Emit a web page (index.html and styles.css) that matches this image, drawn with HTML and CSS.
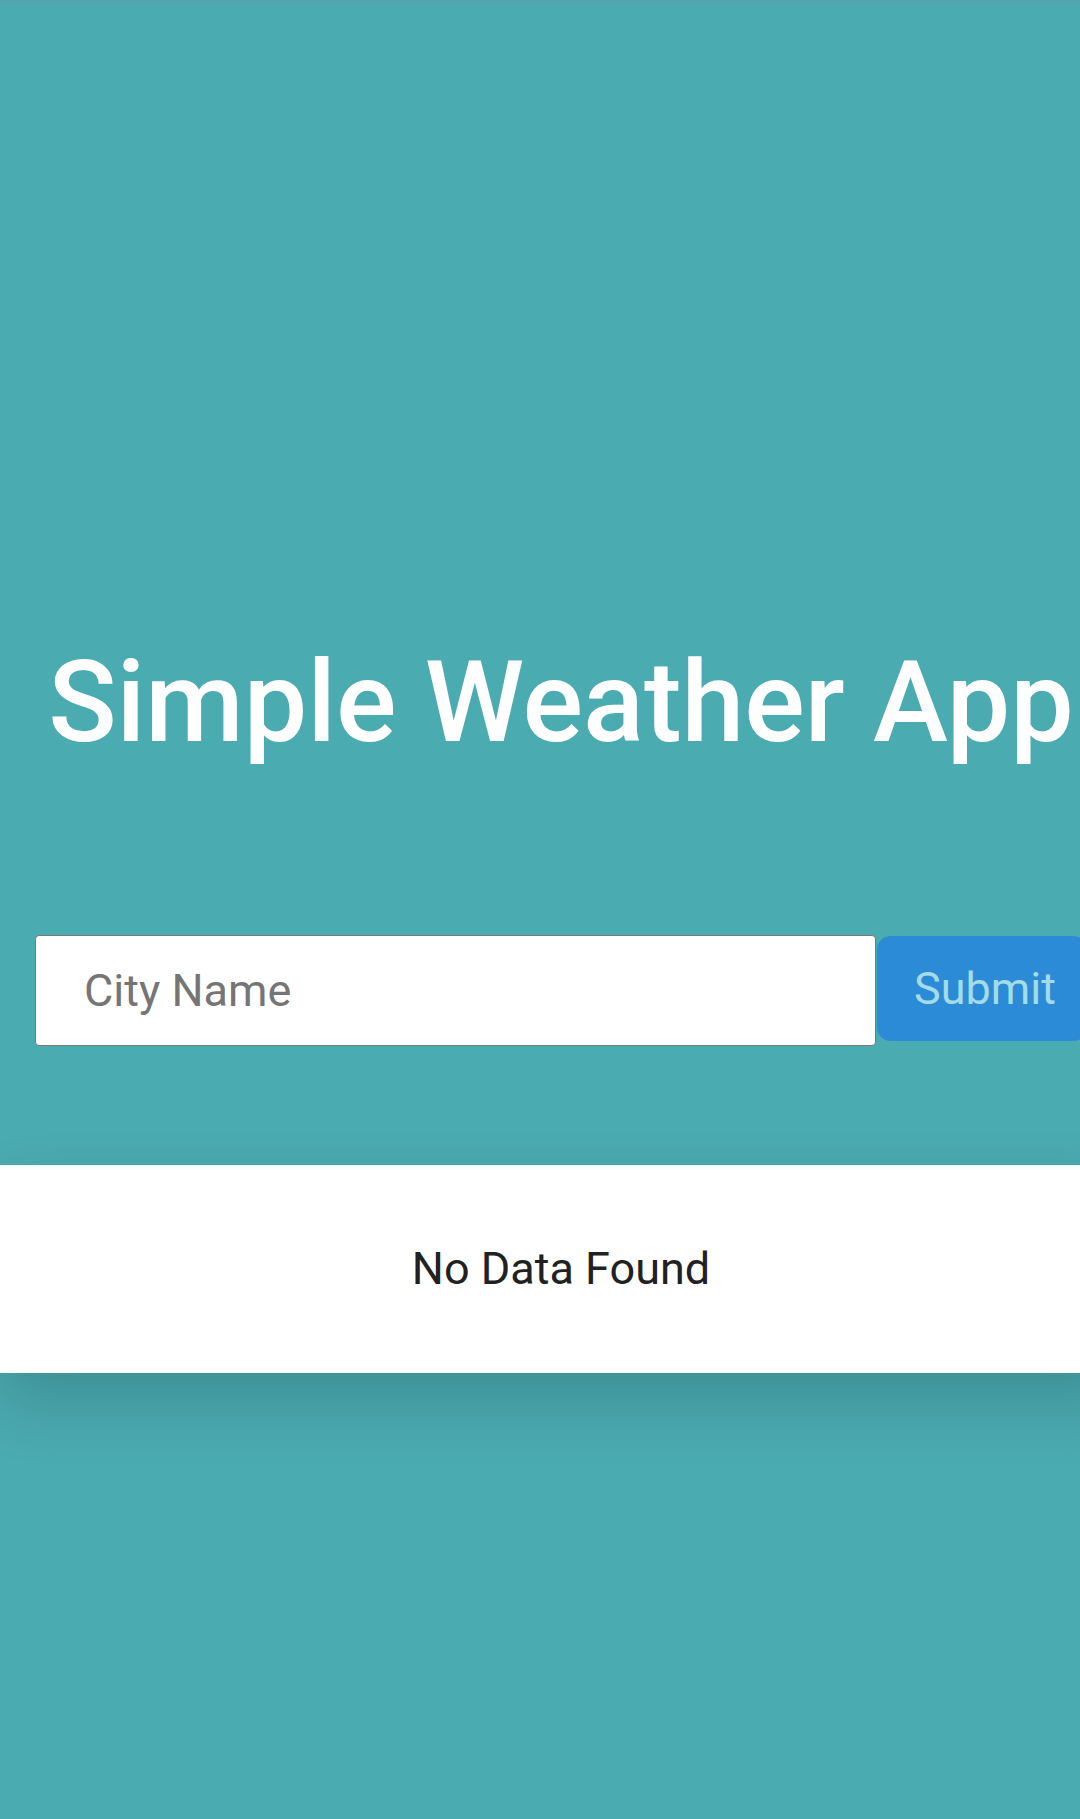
FILE: index.html
```html
<!DOCTYPE html>
<html lang="en">
<head>
<meta charset="utf-8">
<title>Simple Weather App</title>
<link rel="stylesheet" href="styles.css">
</head>
<body>
<div class="page">
  <h1 class="title">Simple Weather App</h1>
  <form class="search">
    <input class="city" type="text" placeholder="City Name">
    <button class="submit" type="button">Submit</button>
  </form>
  <section class="result">
    <p class="empty">No Data Found</p>
  </section>
</div>
</body>
</html>
```

FILE: styles.css
```css
html, body {
  margin: 0;
  padding: 0;
  overflow: hidden;
  background: #4aabb1;
}

.page {
  width: 1122px;
  min-height: 1819px;
  box-sizing: border-box;
  border-top: 4px solid #55a4ab;
  background: #4aabb1;
  font-family: Roboto, "Noto Sans", sans-serif;
  display: flex;
  flex-direction: column;
}

.title {
  margin: 630px 0 0;
  font-size: 113px;
  line-height: 137px;
  font-weight: 500;
  color: #ffffff;
  text-align: center;
}

.search {
  margin: 164px 35px 0;
  display: flex;
  align-items: flex-start;
  gap: 1px;
}

.city {
  flex: 1;
  height: 111px;
  box-sizing: border-box;
  border: 1.5px solid #787878;
  border-radius: 4px;
  padding: 0 0 0 48px;
  font-family: Roboto, "Noto Sans", sans-serif;
  font-size: 45px;
  color: #222;
  background: #fff;
  outline: none;
}

.city::placeholder {
  color: #757575;
}

.submit {
  margin-top: 1px;
  height: 105px;
  padding: 0 31px 0 37px;
  border: none;
  border-radius: 14px;
  background: #2c8bd6;
  color: #a3dbe6;
  font-family: Roboto, "Noto Sans", sans-serif;
  font-size: 45px;
}

.result {
  margin-top: 119px;
  background: #ffffff;
  padding: 78px 0;
  text-align: center;
  box-shadow: 0 30px 60px rgba(0, 0, 0, 0.16);
}

.empty {
  margin: 0;
  font-size: 45px;
  line-height: 52px;
  color: #212121;
}
```
